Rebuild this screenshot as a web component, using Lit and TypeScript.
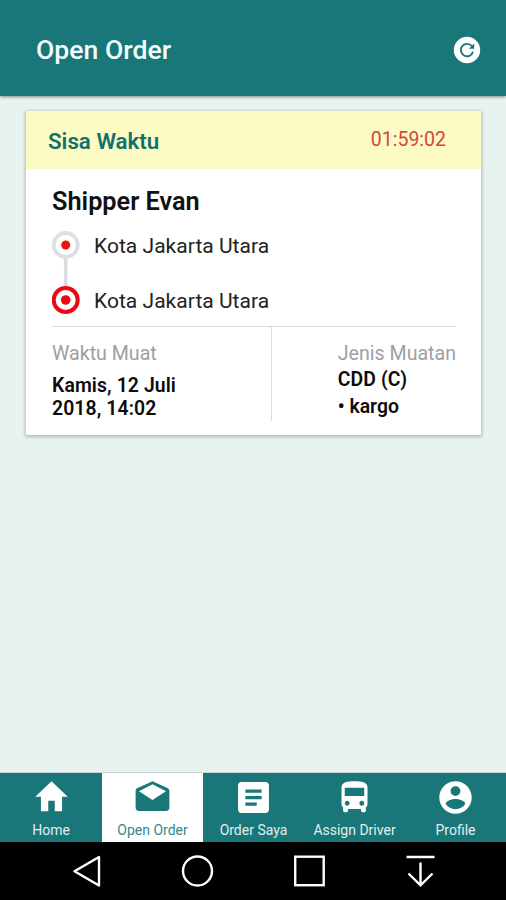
import { LitElement, html, svg, css } from "lit";
import { customElement } from "lit/decorators.js";
import { classMap } from "lit/directives/class-map.js";

const tabs = [
  { label: "Home", icon: svg`<path d="M10 20.500v-6.500h4v6.500h4.500v-9h3.500L12 2 2 11.500h3.500v9z"/>` },
  { label: "Open Order", active: true, icon: svg`<path d="M22.400 8c0-.72-.37-1.350-.94-1.700L12 2 2.540 6.300C1.970 6.650 1.600 7.280 1.600 8v10.300c0 1.100.9 2 2 2h16.800c1.100 0 2-.9 2-2zM12 13.600L3.700 8.200 12 3.900l8.300 4.300z"/>` },
  { label: "Order Saya", icon: svg`<path d="M19.500 2.500h-15c-1.100 0-2 .9-2 2v15c0 1.100.9 2 2 2h15c1.100 0 2-.9 2-2v-15c0-1.100-.9-2-2-2zM14 17H7v-2h7v2zm3-4H7v-2h10v2zm0-4H7V7h10v2z"/>` },
  { label: "Assign Driver", icon: svg`<path d="M4 16c0 .88.39 1.670 1 2.220V20c0 .55.45 1 1 1h1c.55 0 1-.45 1-1v-1h8v1c0 .55.45 1 1 1h1c.55 0 1-.45 1-1v-1.780c.61-.55 1-1.340 1-2.220V6c0-3.500-3.580-4-8-4s-8 .5-8 4v10zm3.500 1c-.83 0-1.500-.67-1.500-1.500S6.670 14 7.500 14s1.500.67 1.500 1.500S8.330 17 7.500 17zm9 0c-.83 0-1.500-.67-1.500-1.500s.67-1.500 1.500-1.500 1.500.67 1.500 1.500-.67 1.500-1.500 1.500zm1.500-6H6V6h12v5z"/>` },
  { label: "Profile", icon: svg`<path d="M12 2C6.480 2 2 6.480 2 12s4.480 10 10 10 10-4.480 10-10S17.520 2 12 2zm0 3c1.660 0 3 1.340 3 3s-1.340 3-3 3-3-1.340-3-3 1.340-3 3-3zm0 14.200c-2.500 0-4.710-1.280-6-3.220.03-1.990 4-3.080 6-3.080 1.990 0 5.970 1.090 6 3.080-1.290 1.940-3.500 3.220-6 3.220z"/>` },
];

@customElement("order-card")
class OrderCard extends LitElement {
  static styles = css`
    :host { display: block; background: #fff; box-shadow: 0 1px 3px 1px rgba(60, 70, 70, 0.32); height: 324px; }
    .timer { height: 58px; background: #fcfbc3; display: flex; justify-content: space-between; padding: 0 35px 0 22px; }
    .timer-label { font-size: 22.3px; font-weight: 600; color: #136f70; line-height: 60px; }
    .timer-value { font-size: 19.5px; color: #d64542; line-height: 58px; }
    .body { padding: 0 25px 0 26px; }
    .shipper { font-size: 25.300px; font-weight: 600; line-height: 30px; padding-top: 18px; color: #111; }
    .route { display: flex; gap: 14px; height: 83px; margin-top: 14px; }
    .track { width: 28px; height: 83px; display: block; flex: none; }
    .stops { display: flex; flex-direction: column; justify-content: space-between; padding: 2px 0 0; box-sizing: border-box; height: 83px; }
    .stop { font-size: 21px; line-height: 26px; color: #222; letter-spacing: 0.03px; }
    .details { margin-top: 12px; border-top: 1px solid #dcdcdc; display: flex; justify-content: space-between; height: 94px; }
    .load { width: 219px; border-right: 1px solid #dcdcdc; padding-top: 15px; height: 79px; }
    .cargo { padding-top: 15px; white-space: nowrap; }
    .caption { font-size: 19.6px; line-height: 24px; color: #a0a0a0; }
    .strong { font-size: 19.4px; font-weight: 600; color: #0c0c0c; line-height: 23px; letter-spacing: 0.1px; }
    .date { padding-top: 8px; }
    .type { padding-top: 2px; }
    .item { padding-top: 4px; letter-spacing: 0; }
  `;
  render() {
    return html`
      <div class="timer"><span class="timer-label">Sisa Waktu</span><span class="timer-value">01:59:02</span></div>
      <div class="body">
        <div class="shipper">Shipper Evan</div>
        <div class="route">
          <svg class="track" viewBox="0 0 28 83">
            <path d="M13.700 27V56" stroke="#dadbdf" stroke-width="3.600" />
            <circle cx="13.700" cy="14" r="12" fill="#fff" stroke="#dedfe2" stroke-width="3.800" />
            <circle cx="13.700" cy="14" r="4.500" fill="#f50d0d" />
            <circle cx="13.700" cy="69" r="12" fill="#fff" stroke="#ee0910" stroke-width="4" />
            <circle cx="13.700" cy="69" r="4.800" fill="#ee0910" />
          </svg>
          <div class="stops"><div class="stop">Kota Jakarta Utara</div><div class="stop">Kota Jakarta Utara</div></div>
        </div>
        <div class="details">
          <div class="load"><div class="caption">Waktu Muat</div><div class="strong date">Kamis, 12 Juli<br />2018, 14:02</div></div>
          <div class="cargo"><div class="caption">Jenis Muatan</div><div class="strong type">CDD (C)</div><div class="strong item">• kargo</div></div>
        </div>
      </div>`;
  }
}

@customElement("app-root")
class AppRoot extends LitElement {
  static styles = css`
    :host { display: flex; flex-direction: column; height: 900px; background: #e8f2f1; font-family: Roboto, sans-serif; overflow: hidden; }
    .bar { height: 96px; flex: none; box-sizing: border-box; background: #19777a; display: flex; align-items: center; justify-content: space-between; padding: 3px 25px 0 36px; color: #f0fbfb; box-shadow: 0 1px 3px rgba(0, 0, 0, 0.45); }
    .title { font-size: 26.6px; font-weight: 500; }
    .refresh { width: 28px; height: 28px; display: block; }
    .content { flex: 1; padding: 15px 25px 0 26px; }
    .tabs { height: 70px; flex: none; display: grid; grid-template-columns: 102px 101px 101px 101px 101px; background: #19777a; border-top: 1px solid #c9d5d5; box-sizing: border-box; }
    .tab { display: flex; flex-direction: column; align-items: center; color: #fff; padding-top: 5px; }
    .tab.active { background: #fff; color: #19777a; }
    .icon { width: 39px; height: 39px; fill: currentColor; display: block; flex: none; }
    .label { font-size: 14px; line-height: 18px; margin-top: 4px; white-space: nowrap; opacity: 0.88; }
    .system { height: 58px; flex: none; background: #000; }
    .keys { width: 506px; height: 58px; display: block; fill: none; stroke: #fff; stroke-width: 2.400; }
  `;
  render() {
    return html`
      <header class="bar">
        <span class="title">Open Order</span>
        <svg class="refresh" viewBox="0 0 28 28">
          <circle cx="14" cy="14" r="13.200" fill="#fff" />
          <path d="M19 10.300A6.200 6.200 0 1 0 20 15.800" fill="none" stroke="#19777a" stroke-width="1.900" />
          <path d="M21.200 7.400v5.400h-5.400z" fill="#19777a" />
        </svg>
      </header>
      <main class="content"><order-card></order-card></main>
      <nav class="tabs">
        ${tabs.map((t) => html`<div class=${classMap({ tab: true, active: !!t.active })}>
          <svg class="icon" viewBox="0 0 24 24">${t.icon}</svg><span class="label">${t.label}</span></div>`)}
      </nav>
      <footer class="system">
        <svg class="keys" viewBox="0 0 506 58">
          <path d="M99 15V43.500L74.500 29.300z" stroke-linejoin="round" />
          <circle cx="197.500" cy="29" r="14.500" />
          <rect x="295.200" y="14.700" width="28.500" height="28.500" />
          <path d="M406.500 15h28M420.500 20.500V43M408.500 31.500l12 11.800 12-11.800" />
        </svg>
      </footer>`;
  }
}
